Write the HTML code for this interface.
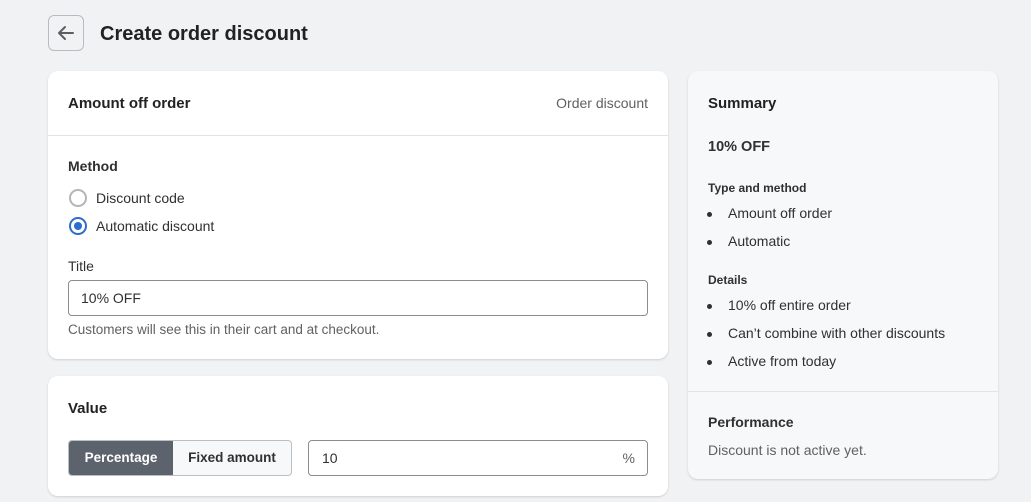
<!DOCTYPE html><html><head><style>
body{margin:0;width:1031px;height:502px;background:#f1f2f4;font-family:"Liberation Sans",sans-serif;color:#303030;position:relative;overflow:hidden;font-size:14px}
.a{position:absolute;white-space:nowrap}
.card{position:absolute;background:#fff;border-radius:10px;box-shadow:0 1px 2px rgba(0,0,0,.15)}
.h{font-size:15px;font-weight:bold;color:#202223}
.r{position:absolute;width:14px;height:14px;border-radius:50%;border:2px solid #b5b5b5;background:#fff}
.g{color:#616161}
.li{position:absolute;left:708px;white-space:nowrap}
.li:before{content:"";position:absolute;left:-1px;top:7px;width:5px;height:5px;border-radius:50%;background:#303030}
.li span{margin-left:20px}
</style></head><body>
<div class="a" style="left:48px;top:15px;width:34px;height:34px;border:1px solid #b8bbbf;border-radius:6px"><svg width="34" height="34" viewBox="0 0 34 34"><path d="M24 17H10M16 11l-6 6 6 6" fill="none" stroke="#5c5f62" stroke-width="2" stroke-linecap="round" stroke-linejoin="round"/></svg></div>
<div class="a" style="left:100px;top:23px;font-size:20px;font-weight:bold;color:#202223">Create order discount</div>

<div class="card" style="left:48px;top:71px;width:620px;height:288px">
<div class="a h" style="left:20px;top:24px">Amount off order</div>
<div class="a g" style="right:20px;top:24px">Order discount</div>
<div class="a" style="left:0;top:64px;width:620px;height:1px;background:#e3e3e3"></div>
<div class="a" style="left:20px;top:87px;font-weight:bold">Method</div>
<div class="r" style="left:21px;top:118px"></div>
<div class="a" style="left:48px;top:119px">Discount code</div>
<div class="r" style="left:21px;top:146px;border-color:#2c6ecb"><div style="position:absolute;left:3px;top:3px;width:8px;height:8px;border-radius:50%;background:#2c6ecb"></div></div>
<div class="a" style="left:48px;top:147px">Automatic discount</div>
<div class="a" style="left:20px;top:187px">Title</div>
<div class="a" style="left:20px;top:209px;width:578px;height:34px;border:1px solid #8a8d91;border-radius:4px"><span style="position:absolute;left:12px;top:9px">10% OFF</span></div>
<div class="a g" style="left:20px;top:251px;font-size:13.5px">Customers will see this in their cart and at checkout.</div>
</div>

<div class="card" style="left:48px;top:376px;width:620px;height:120px">
<div class="a h" style="left:20px;top:24px">Value</div>
<div class="a" style="left:20px;top:64px;width:222px;height:34px;border:1px solid #babfc3;border-radius:4px;background:#f7f8fa;overflow:hidden">
<div style="position:absolute;left:0;top:0;width:104px;height:34px;background:#5c636d;color:#fff;font-weight:bold;text-align:center;line-height:34px;font-size:13.5px">Percentage</div>
<div style="position:absolute;left:104px;top:0;width:118px;height:34px;text-align:center;line-height:34px;font-size:13.5px;font-weight:bold;color:#303030">Fixed amount</div></div>
<div class="a" style="left:260px;top:64px;width:338px;height:34px;border:1px solid #8a8d91;border-radius:4px"><span style="position:absolute;left:13px;top:9px">10</span><span class="g" style="position:absolute;right:12px;top:9px">%</span></div>
</div>

<div class="card" style="left:688px;top:71px;width:310px;height:408px;background:#f7f8fa"></div>
<div class="a h" style="left:708px;top:95px">Summary</div>
<div class="a" style="left:708px;top:139px;font-weight:bold;font-size:14.5px">10% OFF</div>
<div class="a" style="left:708px;top:181px;font-size:12px;font-weight:bold">Type and method</div>
<div class="li" style="top:205px"><span>Amount off order</span></div>
<div class="li" style="top:233px"><span>Automatic</span></div>
<div class="a" style="left:708px;top:273px;font-size:12px;font-weight:bold">Details</div>
<div class="li" style="top:297px"><span>10% off entire order</span></div>
<div class="li" style="top:325px"><span>Can’t combine with other discounts</span></div>
<div class="li" style="top:353px"><span>Active from today</span></div>
<div class="a" style="left:688px;top:391px;width:310px;height:1px;background:#e1e3e5"></div>
<div class="a" style="left:708px;top:414px;font-weight:bold">Performance</div>
<div class="a g" style="left:708px;top:442px">Discount is not active yet.</div>
</body></html>
